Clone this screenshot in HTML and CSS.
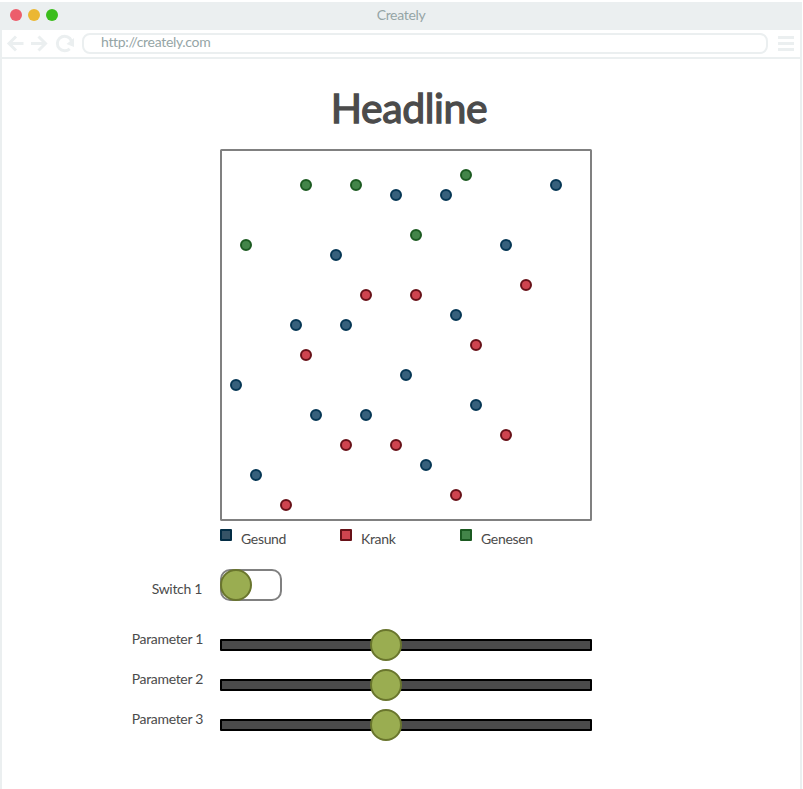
FILE: index.html
```html
<!DOCTYPE html>
<html lang="de">
<head>
<meta charset="utf-8">
<title>Creately</title>
<link rel="stylesheet" href="styles.css">
</head>
<body>
<div class="browser">
  <header class="titlebar">
    <div class="lights"><i class="light close"></i><i class="light minimize"></i><i class="light maximize"></i></div>
    <span class="window-title">Creately</span>
  </header>
  <nav class="toolbar">
    <svg class="nav-icons" width="76" height="27" viewBox="0 0 76 27" fill="none" stroke="#ebeff0" stroke-width="3">
      <path d="M21.500 13.500H7M14 6.500l-7 7 7 7"/>
      <path d="M29 13.500H43.500M36.500 6.500l7 7-7 7"/>
      <path d="M67.700 18.800A7.300 7.300 0 1 1 67.900 8.400L69.500 11"/>
      <path d="M72 8v9l-7.500-3z" fill="#ebeff0" stroke="none"/>
    </svg>
    <div class="address">http://creately.com</div>
    <div class="menu"><i></i><i></i><i></i></div>
  </nav>
  <main class="page">
    <h1 class="headline">Headline</h1>
    <svg class="plot" viewBox="220 149 372 372">
      <rect x="221" y="150" width="370" height="370" rx="0.500"/>
      <g class="healthy">
        <circle cx="396" cy="195" r="5"/><circle cx="446" cy="195" r="5"/><circle cx="556" cy="185" r="5"/>
        <circle cx="336" cy="255" r="5"/><circle cx="506" cy="245" r="5"/><circle cx="456" cy="315" r="5"/>
        <circle cx="296" cy="325" r="5"/><circle cx="346" cy="325" r="5"/><circle cx="236" cy="385" r="5"/>
        <circle cx="406" cy="375" r="5"/><circle cx="316" cy="415" r="5"/><circle cx="366" cy="415" r="5"/>
        <circle cx="476" cy="405" r="5"/><circle cx="426" cy="465" r="5"/><circle cx="256" cy="475" r="5"/>
      </g>
      <g class="sick">
        <circle cx="526" cy="285" r="5"/><circle cx="366" cy="295" r="5"/><circle cx="416" cy="295" r="5"/>
        <circle cx="476" cy="345" r="5"/><circle cx="306" cy="355" r="5"/><circle cx="506" cy="435" r="5"/>
        <circle cx="346" cy="445" r="5"/><circle cx="396" cy="445" r="5"/><circle cx="456" cy="495" r="5"/>
        <circle cx="286" cy="505" r="5"/>
      </g>
      <g class="recovered">
        <circle cx="306" cy="185" r="5"/><circle cx="356" cy="185" r="5"/><circle cx="466" cy="175" r="5"/>
        <circle cx="246" cy="245" r="5"/><circle cx="416" cy="235" r="5"/>
      </g>
    </svg>
    <div class="legend">
      <div class="key"><i class="swatch blue"></i><span>Gesund</span></div>
      <div class="key"><i class="swatch red"></i><span>Krank</span></div>
      <div class="key"><i class="swatch green"></i><span>Genesen</span></div>
    </div>
    <div class="row switch-row"><span class="label">Switch 1</span><div class="switch"><i class="knob"></i></div></div>
    <div class="row"><span class="label">Parameter 1</span><div class="slider"><div class="track"></div><i class="knob"></i></div></div>
    <div class="row"><span class="label">Parameter 2</span><div class="slider"><div class="track"></div><i class="knob"></i></div></div>
    <div class="row"><span class="label">Parameter 3</span><div class="slider"><div class="track"></div><i class="knob"></i></div></div>
  </main>
</div>
</body>
</html>
```
FILE: styles.css
```css
* { box-sizing: border-box; }
body {
  margin: 0;
  padding-top: 2px;
  background: #fff;
  color: #4b4b4b;
  font: 14px/20px Lato, sans-serif;
  letter-spacing: -0.32px;
  overflow: hidden;
}
.browser { width: 802px; height: 787px; display: flex; flex-direction: column; }
.titlebar {
  height: 28px;
  flex: none;
  display: grid;
  grid-template-columns: 1fr auto 1fr;
  align-items: center;
  padding: 0 0 3px 10px;
  background: #ebeff0;
  color: #95a5a6;
}
.lights { display: flex; gap: 6px; }
.light { width: 12px; height: 12px; border-radius: 50%; }
.close { background: #ec5e6c; }
.minimize { background: #ebb733; }
.maximize { background: #3bbd1c; }
.window-title { padding-right: 10px; }
.toolbar {
  height: 29px;
  flex: none;
  display: flex;
  align-items: flex-start;
  border: solid #ebeff0;
  border-width: 0 2px 2px;
}
.nav-icons { flex: none; width: 76px; margin-right: 4px; }
.address {
  width: 686px;
  height: 21px;
  margin-top: 3px;
  padding-left: 17px;
  border: 2px solid #ebeff0;
  border-radius: 8px;
  color: #95a5a6;
  line-height: 14px;
}
.menu { display: grid; gap: 3px; margin: 6px 0 0 10px; }
.menu i { width: 16px; height: 3px; background: #ebeff0; }
.page {
  flex: 1;
  padding-left: 128px;
  border: solid #ebeff0;
  border-width: 0 2px;
}
.headline {
  width: 372px;
  height: 90px;
  margin: 0 0 0 90px;
  padding-top: 24px;
  padding-left: 6px;
  font-size: 41px;
  line-height: 50px;
  font-weight: 400;
  letter-spacing: -0.4px;
  text-align: center;
  -webkit-text-stroke: 1.3px currentColor;
}
.plot { display: block; width: 372px; height: 372px; margin-left: 90px; }
.plot rect { fill: none; stroke: #808080; stroke-width: 2; }
.plot circle { stroke-width: 2; }
.healthy { fill: #36607c; stroke: #053654; }
.sick { fill: #cf444f; stroke: #681118; }
.recovered { fill: #438549; stroke: #1b5a21; }
.legend { display: flex; margin-left: 90px; padding-top: 8px; height: 48px; }
.key { display: flex; width: 120px; gap: 9px; }
.swatch { width: 12px; height: 12px; border: 2px solid; border-radius: 1px; }
.blue { background: #355366; border-color: #032d45; }
.red { background: #cf444f; border-color: #681118; }
.green { background: #438549; border-color: #1b5a21; }
.row { display: flex; height: 32px; margin-bottom: 8px; }
.switch-row { margin-bottom: 28px; }
.label { width: 73px; margin-right: 17px; text-align: right; white-space: nowrap; }
.switch-row .label { padding: 10px 1px 0 0; }
.switch { width: 62px; height: 32px; border: 2px solid #808080; border-radius: 10px; }
.knob {
  display: block;
  width: 32px;
  height: 32px;
  border: 2px solid #69752d;
  border-radius: 50%;
  background: #9aad51;
}
.switch .knob { margin: -2px; }
.slider { display: grid; width: 372px; align-items: center; }
.slider > * { grid-area: 1 / 1; }
.track { height: 12px; border: 2px solid #000; border-radius: 1px; background: #4b4b4b; }
.slider .knob { margin-left: 150px; z-index: 1; }
```
